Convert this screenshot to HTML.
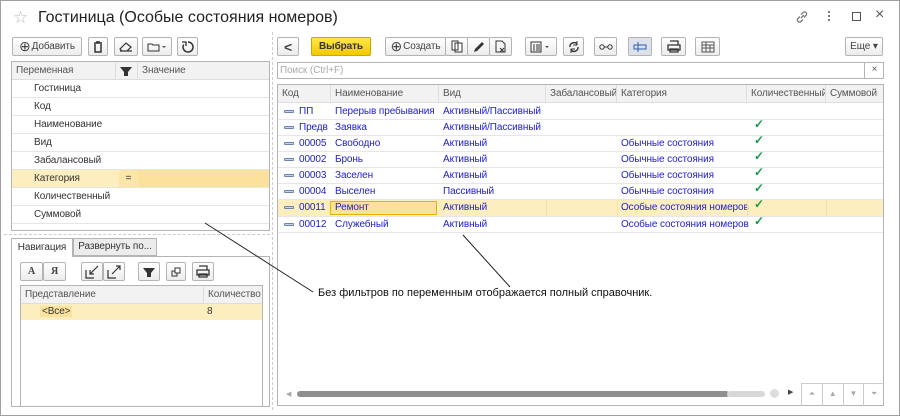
<!DOCTYPE html>
<html><head><meta charset="utf-8"><style>
*{box-sizing:border-box;margin:0;padding:0}
body{width:900px;height:416px;position:relative;background:#fff;font-family:"Liberation Sans",sans-serif;font-size:10px;letter-spacing:-0.1px;color:#333;overflow:hidden}
.a{position:absolute}
.win{left:0;top:0;width:900px;height:416px;border:1px solid #a0a0a0}
.btn{position:absolute;height:19px;border:1px solid #b4b4b4;border-radius:2px;background:linear-gradient(#fff,#ececec);display:flex;align-items:center;justify-content:center;font-size:10px;color:#444;white-space:nowrap}
.tbl{position:absolute;border:1px solid #b4b4b4;background:#fff}
.hdr{position:absolute;left:0;right:0;top:0;height:18px;background:#f2f2f2;border-bottom:1px solid #ddd}
.hc{position:absolute;top:0;height:18px;line-height:18px;padding-left:4px;border-right:1px solid #ddd;color:#555;white-space:nowrap;overflow:hidden}
.row{position:absolute;left:0;right:0;border-bottom:1px solid #e6e6e6}
.c{position:absolute;white-space:nowrap;overflow:hidden;color:#2020d0;padding-left:4px}
.k{color:#1a9a4a;font-size:12px;font-weight:bold}
.dash{width:10px;height:3px;border:1px solid #6b85a8;background:#c6d4e6;position:absolute;top:6px;left:6px;border-radius:1px}
</style></head><body>
<div class="a win"></div>
<div class="a" style="left:13px;top:8px;font-size:17px;color:#bbb">☆</div>
<div class="a" style="left:38px;top:9px;font-size:16px;letter-spacing:0;color:#222">Гостиница (Особые состояния номеров)</div>
<svg class="a" style="left:795px;top:10px" width="14" height="14" viewBox="0 0 14 14" fill="none" stroke="#777" stroke-width="1.3"><path d="M6 8l3-3M5 6.5l-2 2a2 2 0 003 3l2-2M9 7.5l2-2a2 2 0 00-3-3l-2 2"/></svg>
<div class="a" style="left:828px;top:11px;width:2px;height:2px;background:#777;box-shadow:0 4px #777,0 8px #777"></div>
<div class="a" style="left:852px;top:12px;width:9px;height:9px;border:1.3px solid #555"></div>
<div class="a" style="left:875px;top:6px;font-size:16px;color:#555">×</div>

<!-- left toolbar -->
<div class="btn" style="left:12px;top:37px;width:70px"><span style="font-size:14px;margin-right:1px">⊕</span>Добавить</div>
<div class="btn" style="left:88px;top:37px;width:20px"><svg width="10" height="12"><path d="M1 2h8M3 1h4M2 3v8h6V3" fill="none" stroke="#333" stroke-width="1.5"/></svg></div>
<div class="btn" style="left:114px;top:37px;width:24px"><svg width="14" height="10"><path d="M3 9l-2-2 6-6 5 4-4 4zM1 9h12" fill="none" stroke="#333" stroke-width="1.2"/></svg></div>
<div class="btn" style="left:142px;top:37px;width:30px"><svg width="20" height="10"><path d="M1 2h4l1 1h6v6H1z" fill="none" stroke="#333"/><path d="M15 4h4l-2 2z" fill="#555"/></svg></div>
<div class="btn" style="left:177px;top:37px;width:21px"><svg width="12" height="12"><path d="M6 1a5 5 0 1 1-4.3 2.5" fill="none" stroke="#333" stroke-width="1.5"/><path d="M0 1h4v4" fill="none" stroke="#333" stroke-width="1.3"/></svg></div>

<!-- variables table -->
<div class="tbl" style="left:11px;top:61px;width:259px;height:170px">
 <div class="hdr"><div class="hc" style="left:0;width:104px">Переменная</div><div class="hc" style="left:104px;width:22px;padding:0"><svg width="20" height="18"><path d="M4 5h12l-4 5v4h-4v-4z" fill="#333"/></svg></div><div class="hc" style="left:126px;width:131px;border:0">Значение</div></div>
 <div class="row" style="top:18px;height:18px"><span class="c" style="left:18px;top:3px;color:#333">Гостиница</span></div>
 <div class="row" style="top:36px;height:18px"><span class="c" style="left:18px;top:3px;color:#333">Код</span></div>
 <div class="row" style="top:54px;height:18px"><span class="c" style="left:18px;top:3px;color:#333">Наименование</span></div>
 <div class="row" style="top:72px;height:18px"><span class="c" style="left:18px;top:3px;color:#333">Вид</span></div>
 <div class="row" style="top:90px;height:18px"><span class="c" style="left:18px;top:3px;color:#333">Забалансовый</span></div>
 <div class="row" style="top:108px;height:18px;background:#fdeec0"><span class="c" style="left:18px;top:3px;color:#333">Категория</span><div class="a" style="left:107px;top:0;width:19px;height:17px;background:#fbe6a8;text-align:center;line-height:17px">=</div><div class="a" style="left:126px;top:0;right:0;height:17px;background:#fbe29c"></div></div>
 <div class="row" style="top:126px;height:18px"><span class="c" style="left:18px;top:3px;color:#333">Количественный</span></div>
 <div class="row" style="top:144px;height:18px"><span class="c" style="left:18px;top:3px;color:#333">Суммовой</span></div>
</div>
<div class="a" style="left:4px;top:234px;width:266px;border-top:1px dashed #ccc"></div>
<div class="a" style="left:272px;top:32px;height:378px;border-left:1px dashed #ccc"></div>

<!-- tabs -->
<div class="a" style="left:11px;top:238px;width:62px;height:19px;border:1px solid #b4b4b4;border-bottom:none;background:#fff;line-height:17px;text-align:center;z-index:2;white-space:nowrap">Навигация</div>
<div class="a" style="left:73px;top:238px;width:84px;height:18px;border:1px solid #b4b4b4;background:#ececec;line-height:16px;text-align:center;white-space:nowrap">Развернуть по...</div>
<div class="a" style="left:11px;top:256px;width:259px;height:151px;border:1px solid #b4b4b4"></div>
<div class="btn" style="left:20px;top:262px;width:23px;font-family:'Liberation Serif';font-weight:bold">A</div>
<div class="btn" style="left:43px;top:262px;width:23px;font-family:'Liberation Serif';font-weight:bold">Я</div>
<div class="btn" style="left:81px;top:262px;width:22px"><svg width="14" height="14"><path d="M1 5v8h8M13 1L5 9M5 5v4h4" fill="none" stroke="#333" stroke-width="1.2"/></svg></div>
<div class="btn" style="left:103px;top:262px;width:22px"><svg width="14" height="14"><path d="M1 5v8h8M5 9l8-8M9 1h4v4" fill="none" stroke="#333" stroke-width="1.2"/></svg></div>
<div class="btn" style="left:138px;top:262px;width:22px"><svg width="14" height="12"><path d="M1 2h12l-4 5v4H5V7z" fill="#333"/></svg></div>
<div class="btn" style="left:166px;top:262px;width:20px"><svg width="10" height="10"><rect x="1" y="4" width="5" height="5" fill="none" stroke="#333"/><rect x="4" y="1" width="5" height="5" fill="#fff" stroke="#333"/></svg></div>
<div class="btn" style="left:192px;top:262px;width:22px"><svg width="14" height="13"><path d="M3 1h8v4M1 5h12v5H1zM3 9h8v3H3z" fill="none" stroke="#333" stroke-width="1.3"/></svg></div>
<div class="tbl" style="left:20px;top:285px;width:243px;height:122px">
 <div class="hdr"><div class="hc" style="left:0;width:183px">Представление</div><div class="hc" style="left:183px;width:60px;border:0">Количество</div></div>
 <div class="row" style="top:18px;height:16px;background:#fdeec0;border:0"><span class="a" style="left:19px;top:2px;background:#fbe29c;padding:0 2px;color:#333">&lt;Все&gt;</span><span class="a" style="left:186px;top:2px">8</span></div>
</div>

<!-- right toolbar -->
<div class="btn" style="left:277px;top:37px;width:22px;font-size:14px;font-weight:bold">&lt;</div>
<div class="btn" style="left:311px;top:37px;width:60px;background:linear-gradient(#ffe84a,#f2c800);border-color:#c9a800;font-weight:bold;color:#333">Выбрать</div>
<div class="btn" style="left:385px;top:37px;width:61px"><span style="font-size:14px;margin-right:1px">⊕</span>Создать</div>
<div class="btn" style="left:445px;top:37px;width:23px"><svg width="12" height="13"><path d="M1 1h6v9H1zM4 3h7v9H4z" fill="#fff" stroke="#333"/></svg></div>
<div class="btn" style="left:467px;top:37px;width:23px"><svg width="12" height="12"><path d="M1 11l1-3 7-7 2 2-7 7z" fill="#333"/></svg></div>
<div class="btn" style="left:489px;top:37px;width:23px"><svg width="12" height="13"><path d="M1 1h6l3 3v8H1z" fill="none" stroke="#333"/><path d="M5 8l4 4M9 8l-4 4" stroke="#333"/></svg></div>
<div class="btn" style="left:525px;top:37px;width:32px"><svg width="22" height="12"><rect x="1" y="1" width="10" height="10" fill="none" stroke="#333"/><path d="M4 3v7M7 3v7M9 3v7" stroke="#333"/><path d="M15 5h4l-2 2z" fill="#555"/></svg></div>
<div class="btn" style="left:563px;top:37px;width:21px"><svg width="12" height="12"><path d="M2 6a4 4 0 0 1 7-3M10 6a4 4 0 0 1-7 3" fill="none" stroke="#333" stroke-width="1.4"/><path d="M9 0v4H5M3 12V8h4" fill="none" stroke="#333"/></svg></div>
<div class="btn" style="left:594px;top:37px;width:23px"><svg width="14" height="6"><circle cx="3" cy="3" r="2.2" fill="none" stroke="#333"/><circle cx="11" cy="3" r="2.2" fill="none" stroke="#333"/><path d="M5 3h4" stroke="#333"/></svg></div>
<div class="btn" style="left:628px;top:37px;width:24px;background:#dde2ea"><svg width="14" height="12"><rect x="1" y="4" width="12" height="4" fill="none" stroke="#2a5db0"/><path d="M5 1v10" stroke="#2a5db0"/></svg></div>
<div class="btn" style="left:661px;top:37px;width:25px"><svg width="14" height="13"><path d="M3 1h8v4M1 5h12v5H1zM3 9h8v3H3z" fill="none" stroke="#333" stroke-width="1.3"/></svg></div>
<div class="btn" style="left:695px;top:37px;width:25px"><svg width="14" height="12"><rect x="1" y="1" width="12" height="10" fill="none" stroke="#555"/><path d="M1 4h12M1 7h12M5 1v10M9 4v7" stroke="#555"/></svg></div>
<div class="btn" style="left:845px;top:37px;width:38px">Еще ▾</div>

<!-- search -->
<div class="a" style="left:277px;top:62px;width:607px;height:17px;border:1px solid #b4b4b4;color:#aaa;padding-left:2px;line-height:15px">Поиск (Ctrl+F)</div>
<div class="a" style="left:864px;top:62px;width:20px;height:17px;border-left:1px solid #b4b4b4;text-align:center;line-height:15px;color:#555">×</div>

<!-- grid -->
<div class="tbl" style="left:277px;top:84px;width:607px;height:322px">
 <div class="hdr"><div class="hc" style="left:0;width:53px">Код</div><div class="hc" style="left:53px;width:108px">Наименование</div><div class="hc" style="left:161px;width:107px">Вид</div><div class="hc" style="left:268px;width:71px">Забалансовый</div><div class="hc" style="left:339px;width:130px">Категория</div><div class="hc" style="left:469px;width:79px">Количественный</div><div class="hc" style="left:548px;width:57px;border:0">Суммовой</div></div>
 <div class="row" style="top:19px;height:16px"><div class="dash"></div><span class="c" style="left:17px;top:2px">ПП</span><span class="c" style="left:53px;top:2px">Перерыв пребывания</span><span class="c" style="left:161px;top:2px">Активный/Пассивный</span></div>
 <div class="row" style="top:35px;height:16px"><div class="dash"></div><span class="c" style="left:17px;top:2px">Предв</span><span class="c" style="left:53px;top:2px">Заявка</span><span class="c" style="left:161px;top:2px">Активный/Пассивный</span><span class="c k" style="left:472px;top:-3px">✓</span></div>
 <div class="row" style="top:51px;height:16px"><div class="dash"></div><span class="c" style="left:17px;top:2px">00005</span><span class="c" style="left:53px;top:2px">Свободно</span><span class="c" style="left:161px;top:2px">Активный</span><span class="c" style="left:339px;top:2px">Обычные состояния</span><span class="c k" style="left:472px;top:-3px">✓</span></div>
 <div class="row" style="top:67px;height:16px"><div class="dash"></div><span class="c" style="left:17px;top:2px">00002</span><span class="c" style="left:53px;top:2px">Бронь</span><span class="c" style="left:161px;top:2px">Активный</span><span class="c" style="left:339px;top:2px">Обычные состояния</span><span class="c k" style="left:472px;top:-3px">✓</span></div>
 <div class="row" style="top:83px;height:16px"><div class="dash"></div><span class="c" style="left:17px;top:2px">00003</span><span class="c" style="left:53px;top:2px">Заселен</span><span class="c" style="left:161px;top:2px">Активный</span><span class="c" style="left:339px;top:2px">Обычные состояния</span><span class="c k" style="left:472px;top:-3px">✓</span></div>
 <div class="row" style="top:99px;height:16px"><div class="dash"></div><span class="c" style="left:17px;top:2px">00004</span><span class="c" style="left:53px;top:2px">Выселен</span><span class="c" style="left:161px;top:2px">Пассивный</span><span class="c" style="left:339px;top:2px">Обычные состояния</span><span class="c k" style="left:472px;top:-3px">✓</span></div>
 <div class="row" style="top:115px;height:17px;background:#fdeec0"><div class="dash"></div><span class="c" style="left:17px;top:2px">00011</span><div class="a" style="left:52px;top:1px;width:107px;height:14px;border:1px solid #e8b400;background:#fbe29c"></div><span class="c" style="left:53px;top:2px">Ремонт</span><span class="c" style="left:161px;top:2px">Активный</span><div class="a" style="left:268px;top:0;height:16px;border-left:1px solid #f5e0a8"></div><div class="a" style="left:339px;top:0;height:16px;border-left:1px solid #f5e0a8"></div><span class="c" style="left:339px;top:2px">Особые состояния номеров</span><div class="a" style="left:469px;top:0;height:16px;border-left:1px solid #f5e0a8"></div><div class="a" style="left:548px;top:0;height:16px;border-left:1px solid #f5e0a8"></div><span class="c k" style="left:472px;top:-3px">✓</span></div>
 <div class="row" style="top:132px;height:16px"><div class="dash"></div><span class="c" style="left:17px;top:2px">00012</span><span class="c" style="left:53px;top:2px">Служебный</span><span class="c" style="left:161px;top:2px">Активный</span><span class="c" style="left:339px;top:2px">Особые состояния номеров</span><span class="c k" style="left:472px;top:-3px">✓</span></div>
 <div class="a" style="left:8px;top:305px;font-size:7px;color:#aaa">◀</div>
 <div class="a" style="left:19px;top:306px;width:432px;height:6px;border-radius:3px;background:#8f8f8f"></div>
 <div class="a" style="left:449px;top:306px;width:38px;height:6px;border-radius:3px;background:#d8d8d8"></div>
 <div class="a" style="left:492px;top:304px;width:9px;height:9px;border-radius:50%;background:#ddd"></div>
 <div class="a" style="left:510px;top:303px;font-size:7px;color:#444">▶</div>
 <div class="a" style="left:523px;top:298px;width:83px;height:23px;border-top:1px solid #ccc;display:flex">
  <div style="flex:1;border-left:1px solid #ccc;text-align:center;color:#aaa;font-size:8px;line-height:20px">⏶</div>
  <div style="flex:1;border-left:1px solid #ccc;text-align:center;color:#aaa;font-size:8px;line-height:20px">▲</div>
  <div style="flex:1;border-left:1px solid #ccc;text-align:center;color:#aaa;font-size:8px;line-height:20px">▼</div>
  <div style="flex:1;border-left:1px solid #ccc;text-align:center;color:#aaa;font-size:8px;line-height:20px">⏷</div>
 </div>
</div>

<!-- annotation -->
<svg class="a" style="left:0;top:0" width="900" height="416"><path d="M205 223L313 292M463 235L510 287" stroke="#222" stroke-width="1"/></svg>
<div class="a" style="left:318px;top:287px;font-size:11px;letter-spacing:0;color:#111">Без фильтров по переменным отображается полный справочник.</div>
</body></html>
